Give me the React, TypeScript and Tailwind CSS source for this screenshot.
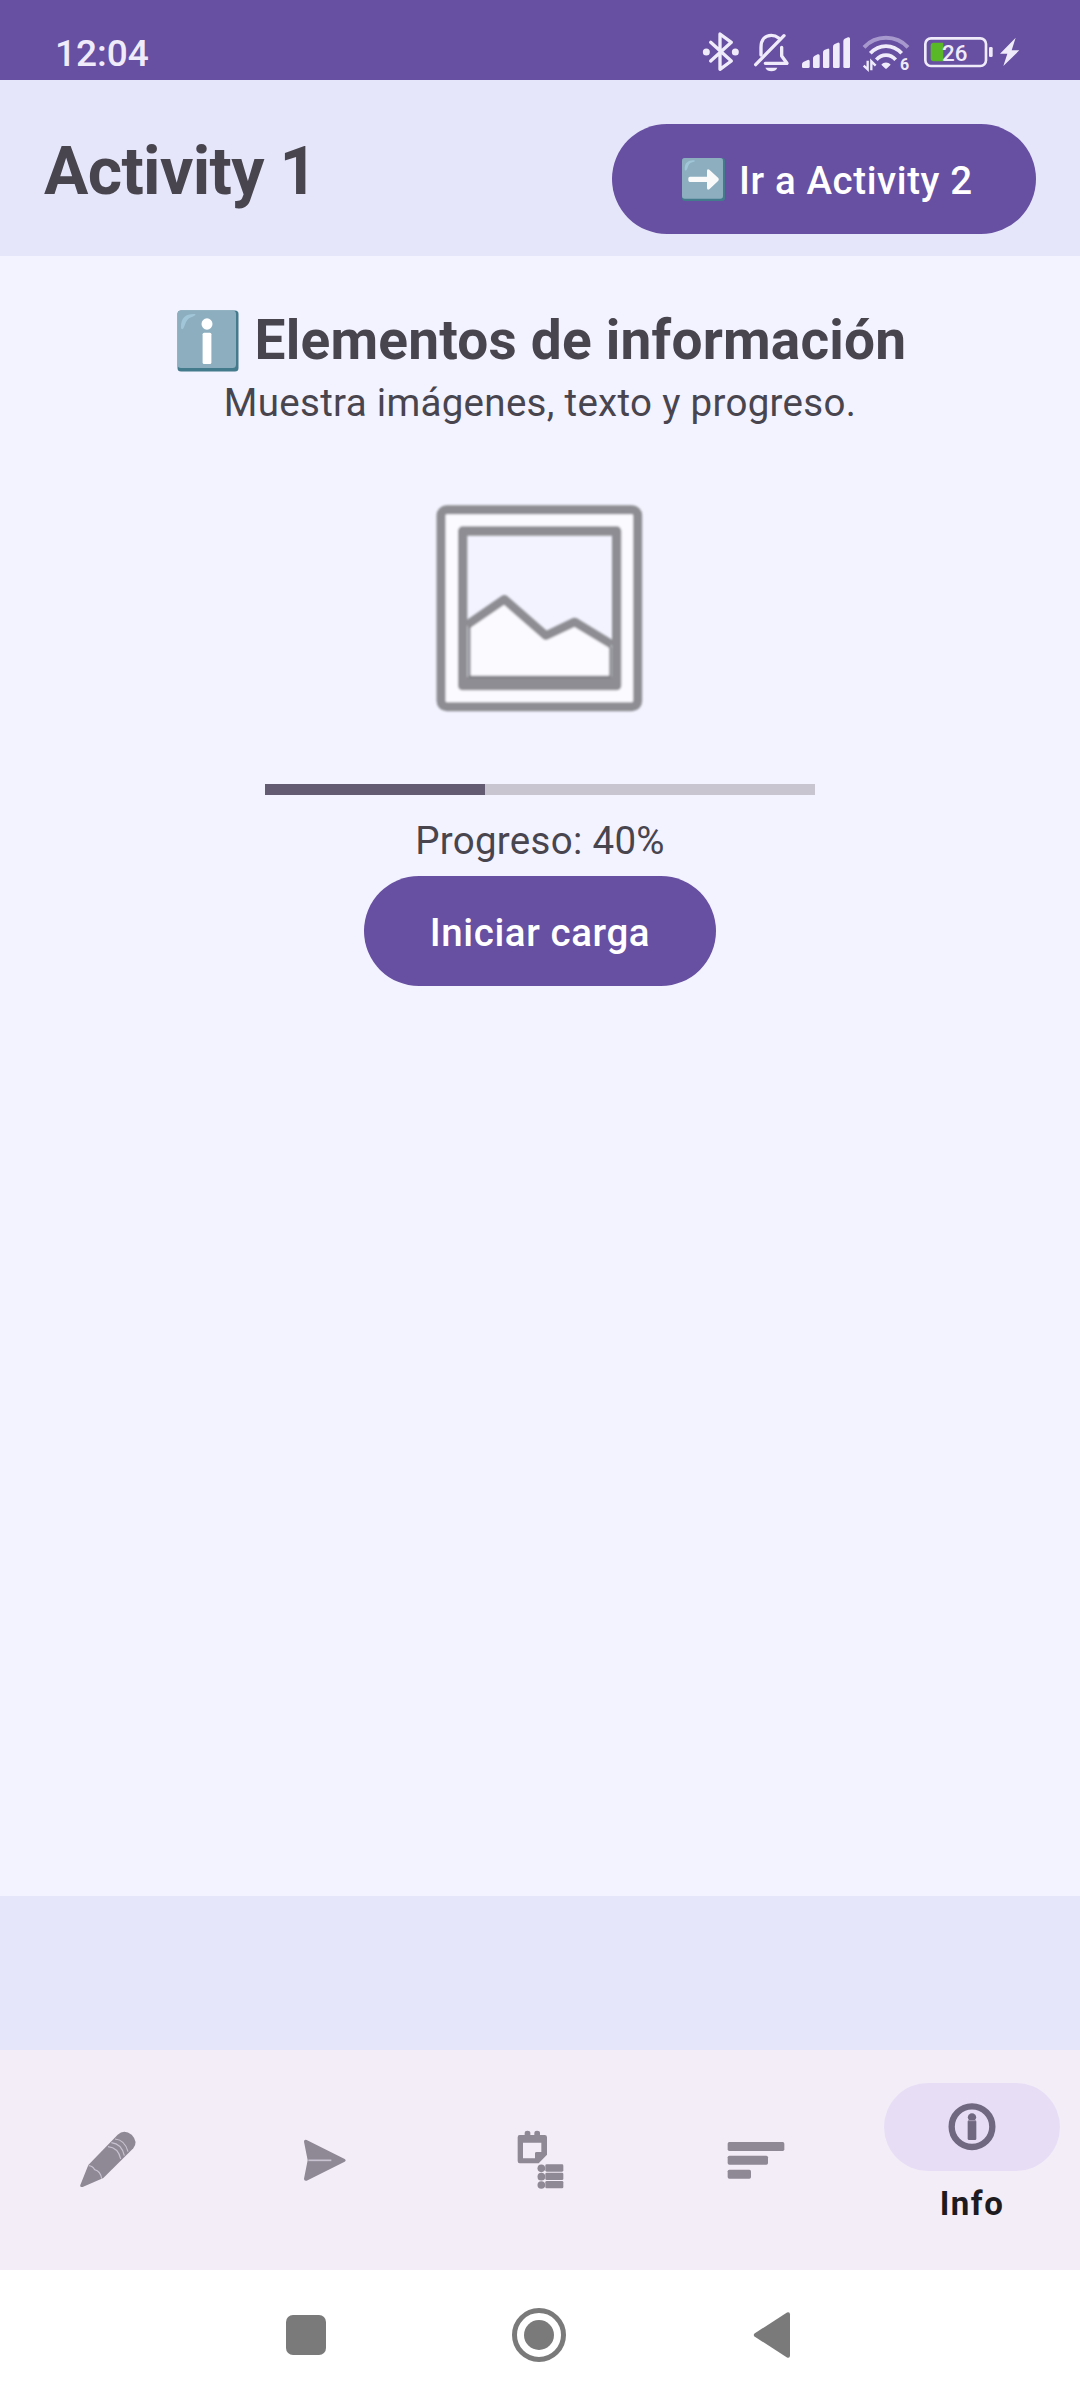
function InfoEmoji() {
  return (
    <svg className="mt-[2px] h-[62px] w-[62px] shrink-0" viewBox="0 0 62 62">
      <rect x="0.5" y="0.5" width="61" height="61" rx="3.5" fill="#437a8c" />
      <rect x="0.5" y="0.5" width="58.5" height="57.5" rx="3.5" fill="#8caebf" />
      <path d="M4 17C4 8 8 4 17 4C20 4 18 6 15 7C9 9 9 13 7 17C6 20 4 20 4 17Z" fill="#a1c6d8" />
      <ellipse cx="30" cy="14" rx="5.5" ry="5.7" fill="#fff" />
      <rect x="25.6" y="22.8" width="8.8" height="31.2" rx="1.5" fill="#fff" />
    </svg>
  );
}

function ArrowEmoji() {
  return (
    <svg className="h-[43px] w-[43px] shrink-0" viewBox="275 177 129 129">
      <rect x="275" y="177" width="129" height="129" rx="8" fill="#437a8c" />
      <rect x="275" y="177" width="123" height="122" rx="8" fill="#8caebf" />
      <path d="M283 211C283 192 292 184 309 184C318 185 313 188 306 190C293 194 295 201 290 211C288 216 283 216 283 211Z" fill="#a1c6d8" />
      <path d="M299 233H350V215Q351 208 357 212L384 237Q387 241 384 245L357 271Q351 275 350 268V249H299Q294 249 294 244V238Q294 233 299 233Z" fill="#fafafa" />
    </svg>
  );
}

function StatusIcons() {
  return (
    <div className="flex h-[43px] items-start">
      <svg className="h-[43px] w-[38px]" viewBox="66 60 114 129" fill="none" stroke="#efebfa" strokeWidth="10" strokeLinejoin="round" strokeLinecap="round">
        <path d="M92 97L154 153L120 178V72L154 97L92 153" />
        <circle cx="79" cy="126" r="5.5" fill="#efebfa" />
        <circle cx="166" cy="126" r="5.5" fill="#efebfa" />
      </svg>
      <svg className="ml-[13px] h-[43px] w-[37px]" viewBox="219 60 111 129" fill="none" stroke="#efebfa" strokeWidth="10" strokeLinecap="round" strokeLinejoin="round">
        <path d="M243 135V112C243 88 256 76 274 76C283 76 290 79 296 84" />
        <path d="M305 112V138L321 160H256" />
        <path d="M227 164L312 77" />
        <path d="M256 173H292C288 187 261 187 256 173Z" fill="#efebfa" stroke="none" />
      </svg>
      <svg className="ml-[11px] h-[43px] w-[50px]" viewBox="363 60 150 129" fill="#efebfa">
        <path d="M366 163Q366 158 370 156L383 150Q389 148 389 154V170Q389 174 385 174H370Q366 174 366 170Z" />
        <path d="M399 145Q399 140 403 138L413 133Q419 131 419 137V170Q419 174 415 174H403Q399 174 399 170Z" />
        <path d="M429 127Q429 122 433 120L443 116Q448 114 448 120V170Q448 174 444 174H433Q429 174 429 170Z" />
        <path d="M459 110Q459 105 463 103L473 98Q479 96 479 102V170Q479 174 475 174H463Q459 174 459 170Z" />
        <path d="M490 93Q490 88 494 86L504 82Q510 80 510 86V170Q510 174 506 174H494Q490 174 490 170Z" />
      </svg>
      <svg className="ml-[11px] h-[43px] w-[48px]" viewBox="546 60 144 129" fill="none" stroke="#efebfa" strokeWidth="11">
        <path d="M552 112C588 74 648 74 684 112" stroke="#a799cd" strokeWidth="12" />
        <path d="M571 130C597 101 639 101 665 130" />
        <path d="M589 149C605 131 631 131 647 149" />
        <path d="M604 164C611 155 625 155 632 164L621 175Q618 178 615 175Z" fill="#efebfa" stroke="none" />
        <path d="M563 152V178L551 167" strokeWidth="7" />
        <path d="M574 181V154L587 167" strokeWidth="7" />
        <text x="660" y="181" fontSize="48" fontWeight="700" fill="#efebfa" stroke="none" fontFamily="Roboto, sans-serif">6</text>
      </svg>
      <svg className="ml-[13px] h-[43px] w-[71px]" viewBox="729 60 213 129">
        <rect x="736" y="85" width="182" height="83" rx="17" fill="none" stroke="#efebfa" strokeWidth="8" />
        <path d="M761 98H790V154H761Q752 154 752 145V107Q752 98 761 98Z" fill="#58b825" />
        <rect x="927" y="111" width="11" height="30" rx="4" fill="#efebfa" />
        <text x="786" y="153" fontSize="67" fontWeight="500" fill="#efebfa" fontFamily="Roboto, sans-serif">26</text>
      </svg>
      <svg className="ml-[5px] h-[43px] w-[21px]" viewBox="957 60 63 129" fill="#efebfa">
        <path d="M1007 83L960 131H982L970 168L1018 121H995Z" />
      </svg>
    </div>
  );
}

function PictureIcon() {
  return (
    <svg className="h-[240px] w-[240px]" viewBox="0 0 720 720" fill="none">
      <defs>
        <filter id="soft" x="-5%" y="-5%" width="110%" height="110%">
          <feGaussianBlur stdDeviation="3" />
        </filter>
      </defs>
      <g filter="url(#soft)" stroke="#8d8d93">
        <path fillRule="evenodd" d="M77 73H641V638H77ZM128 122V586H590V122Z" fill="#fbfbff" stroke="none" />
        <path d="M150 410L253 340L378 447L464 407L568 472V558H150Z" fill="#fbfbff" stroke="none" />
        <rect x="63" y="59" width="590" height="591" rx="17" strokeWidth="27" />
        <path d="M128 123H590V587H128Z" strokeWidth="28" strokeLinejoin="round" />
        <path d="M140 575H580" strokeWidth="28" />
        <path d="M141 405L253 328L378 437L464 396L576 464" strokeWidth="26" strokeLinejoin="round" />
        <path d="M148 408V561H571V470" strokeWidth="7" stroke="#7f7f85" />
      </g>
    </svg>
  );
}

const navIcons = [
  <svg key="edit" className="h-[66px] w-[66px]" viewBox="75 141 198 198" fill="#8f8895">
    <path d="M91 315L115 255L203 164Q222 146 245 164Q265 185 250 205L160 294L98 321Q89 322 91 315Z" />
    <path d="M116 257Q128 258 134 269Q151 273 155 296M174 200Q205 203 212 237M184 188Q215 191 223 227M195 177Q225 180 234 215" fill="none" stroke="#c9c2d0" strokeWidth="3.5" />
  </svg>,
  <svg key="send" className="h-[66px] w-[66px]" viewBox="723 141 198 198" fill="#8f8895">
    <path d="M762 185Q762 177 770 180L884 237Q890 241 884 245L770 302Q762 304 762 296L773 241Z" />
    <path d="M775 241H844" stroke="#c9c2d0" strokeWidth="5" />
  </svg>,
  <svg key="agenda" className="h-[66px] w-[66px]" viewBox="81 111 198 198" fill="#8f8895">
    <path fillRule="evenodd" d="M119 135H134V128Q134 122 142 122Q151 122 151 128V135H163V128Q163 122 171 122Q180 122 180 128V135H194Q201 135 201 142V194L176 220H119Q113 220 113 213V142Q113 135 119 135ZM129 158V205H165V190Q165 186 170 186H184V158Z" />
    <circle cx="184" cy="235" r="11.5" />
    <circle cx="184" cy="260" r="11.5" />
    <circle cx="184" cy="285" r="11.5" />
    <rect x="196" y="223" width="54" height="22" rx="4" />
    <rect x="196" y="248" width="54" height="22" rx="4" />
    <rect x="196" y="273" width="54" height="22" rx="4" />
  </svg>,
  <svg key="sort" className="h-[66px] w-[66px]" viewBox="729 111 198 198" fill="#8f8895">
    <rect x="743" y="156" width="170" height="27" rx="5" />
    <rect x="743" y="197" width="121" height="27" rx="5" />
    <rect x="743" y="239" width="70" height="27" rx="5" />
  </svg>,
];

export default function App() {
  return (
    <div className="flex h-[2400px] w-[1080px] flex-col overflow-hidden bg-[#f3f3ff] font-['Roboto',sans-serif] text-[#49454f]">
      <div className="flex h-[80px] shrink-0 items-start justify-between bg-[#674fa1] pt-[30px] pr-[60px] pl-[55px]">
        <span className="text-[37px] leading-[47px] font-medium text-[#efebfa]">12:04</span>
        <StatusIcons />
      </div>

      <header className="flex h-[176px] shrink-0 items-start justify-between bg-[#e5e6fa] px-[44px]">
        <h1 className="mt-[48px] text-[66px] leading-[88px] font-bold tracking-[-0.65px]">Activity 1</h1>
        <button className="mt-[44px] flex h-[110px] w-[424px] items-center rounded-full bg-[#674fa1] pl-[70px] text-[38.5px] font-medium tracking-[0.6px] text-white">
          <ArrowEmoji />
          <span className="ml-[14px] pt-[3px] whitespace-nowrap">Ir a Activity 2</span>
        </button>
      </header>

      <main className="flex flex-1 flex-col items-center">
        <h2 className="mt-[51px] flex h-[66px] items-center pl-[3px] text-[55px] leading-[66px] font-bold tracking-[0.2px]">
          <InfoEmoji />
          <span className="ml-[16px] whitespace-nowrap">Elementos de información</span>
        </h2>
        <p className="mt-[8px] text-[38.5px] leading-[44px] tracking-[0.3px]">Muestra imágenes, texto y progreso.</p>
        <div className="mt-[65px]">
          <PictureIcon />
        </div>
        <div className="mt-[54px] h-[11px] w-[550px] bg-[#c8c5d0]">
          <div className="h-full w-[40%] bg-[#625b71]" />
        </div>
        <p className="mt-[24px] text-[38.5px] leading-[44px] tracking-[0.3px]">Progreso: 40%</p>
        <button className="mt-[13px] flex h-[110px] w-[352px] items-center justify-center rounded-full bg-[#674fa1] pt-[3px] text-[38.5px] font-medium tracking-[0.6px] text-white">
          Iniciar carga
        </button>
      </main>

      <div className="h-[154px] shrink-0 bg-[#e5e6fa]" />

      <nav className="grid h-[220px] shrink-0 grid-cols-5 bg-[#f3edf7]">
        {navIcons.map((icon) => (
          <div key={icon.key} className="flex items-center justify-center">
            {icon}
          </div>
        ))}
        <div className="flex flex-col items-center pt-[33px]">
          <div className="flex h-[88px] w-[176px] items-center justify-center rounded-full bg-[#e7def6]">
            <svg className="h-[66px] w-[66px]" viewBox="237 162 198 198" fill="#706880">
              <circle cx="336" cy="260" r="61" fill="none" stroke="#706880" strokeWidth="19" />
              <circle cx="336" cy="232" r="12.5" />
              <rect x="323" y="241" width="26" height="59" rx="4" />
              <path d="M324 242H348" stroke="#a69db4" strokeWidth="3" />
            </svg>
          </div>
          <span className="mt-[12px] text-[33px] leading-[42px] font-bold tracking-[1.5px] text-[#1d1b20]">Info</span>
        </div>
      </nav>

      <div className="flex h-[130px] shrink-0 items-center bg-white pl-[189px]">
        <div className="grid w-[699px] grid-cols-3 place-items-center">
          <div className="h-[40px] w-[40px] rounded-[7px] bg-[#7a7a7a]" />
          <div className="flex h-[54px] w-[54px] items-center justify-center rounded-full border-[5px] border-[#7a7a7a]">
            <div className="h-[30px] w-[30px] rounded-full bg-[#7a7a7a]" />
          </div>
          <svg className="h-[48px] w-[38px]" viewBox="0 0 38 48" fill="#7a7a7a">
            <path d="M1.5 22.5Q0 24 1.5 25.5L34 46.5Q37 47.5 37 44.5V3.5Q37 .5 34 1.5Z" />
          </svg>
        </div>
      </div>
    </div>
  );
}
